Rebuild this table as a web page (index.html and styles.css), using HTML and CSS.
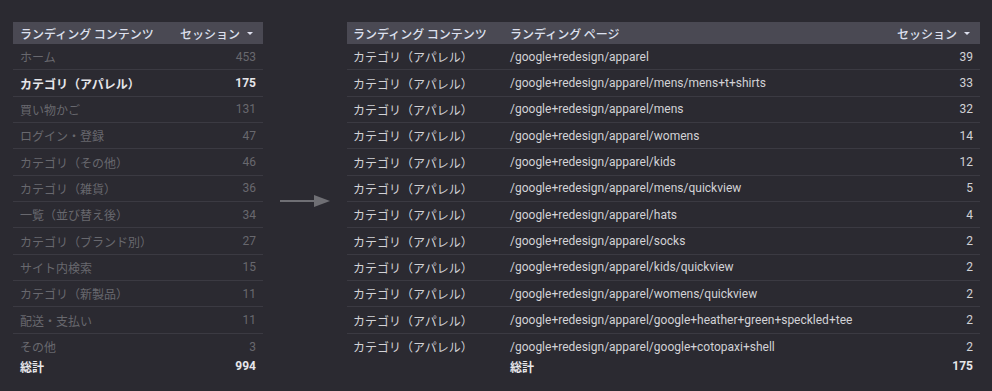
FILE: index.html
```html
<!DOCTYPE html>
<html lang="ja">
<head>
<meta charset="utf-8">
<link rel="stylesheet" href="styles.css">
</head>
<body>
<div class="page">
  <div class="tbl left">
    <div class="hdr">
      <span class="c1">ランディング コンテンツ</span>
      <span class="num sort">セッション <span class="tri"></span></span>
    </div>
    <div class="row dim"><span>ホーム</span><span class="num">453</span></div>
    <div class="row hi"><span>カテゴリ（アパレル）</span><span class="num">175</span></div>
    <div class="row dim"><span>買い物かご</span><span class="num">131</span></div>
    <div class="row dim"><span>ログイン・登録</span><span class="num">47</span></div>
    <div class="row dim"><span>カテゴリ（その他）</span><span class="num">46</span></div>
    <div class="row dim"><span>カテゴリ（雑貨）</span><span class="num">36</span></div>
    <div class="row dim"><span>一覧（並び替え後）</span><span class="num">34</span></div>
    <div class="row dim"><span>カテゴリ（ブランド別）</span><span class="num">27</span></div>
    <div class="row dim"><span>サイト内検索</span><span class="num">15</span></div>
    <div class="row dim"><span>カテゴリ（新製品）</span><span class="num">11</span></div>
    <div class="row dim"><span>配送・支払い</span><span class="num">11</span></div>
    <div class="row dim last"><span>その他</span><span class="num">3</span></div>
    <div class="total"><span>総計</span><span class="num">994</span></div>
  </div>

  <div class="arrow">
    <svg width="50" height="12" viewBox="0 0 50 12">
      <rect x="0" y="5" width="37" height="2" fill="#6f6f74"/>
      <polygon points="34,0 50,6 34,12" fill="#6f6f74"/>
    </svg>
  </div>

  <div class="tbl right">
    <div class="hdr">
      <span>ランディング コンテンツ</span>
      <span>ランディング ページ</span>
      <span class="num sort">セッション <span class="tri"></span></span>
    </div>
    <div class="row"><span>カテゴリ（アパレル）</span><span class="url">/google+redesign/apparel</span><span class="num">39</span></div>
    <div class="row"><span>カテゴリ（アパレル）</span><span class="url">/google+redesign/apparel/mens/mens+t+shirts</span><span class="num">33</span></div>
    <div class="row"><span>カテゴリ（アパレル）</span><span class="url">/google+redesign/apparel/mens</span><span class="num">32</span></div>
    <div class="row"><span>カテゴリ（アパレル）</span><span class="url">/google+redesign/apparel/womens</span><span class="num">14</span></div>
    <div class="row"><span>カテゴリ（アパレル）</span><span class="url">/google+redesign/apparel/kids</span><span class="num">12</span></div>
    <div class="row"><span>カテゴリ（アパレル）</span><span class="url">/google+redesign/apparel/mens/quickview</span><span class="num">5</span></div>
    <div class="row"><span>カテゴリ（アパレル）</span><span class="url">/google+redesign/apparel/hats</span><span class="num">4</span></div>
    <div class="row"><span>カテゴリ（アパレル）</span><span class="url">/google+redesign/apparel/socks</span><span class="num">2</span></div>
    <div class="row"><span>カテゴリ（アパレル）</span><span class="url">/google+redesign/apparel/kids/quickview</span><span class="num">2</span></div>
    <div class="row"><span>カテゴリ（アパレル）</span><span class="url">/google+redesign/apparel/womens/quickview</span><span class="num">2</span></div>
    <div class="row"><span>カテゴリ（アパレル）</span><span class="url">/google+redesign/apparel/google+heather+green+speckled+tee</span><span class="num">2</span></div>
    <div class="row last"><span>カテゴリ（アパレル）</span><span class="url">/google+redesign/apparel/google+cotopaxi+shell</span><span class="num">2</span></div>
    <div class="total"><span></span><span>総計</span><span class="num">175</span></div>
  </div>
</div>
</body>
</html>
```

FILE: styles.css
```css
html, body {
  margin: 0;
  padding: 0;
  background: #2b2a31;
}

body {
  font-family: Roboto, "Noto Sans CJK JP", sans-serif;
  font-size: 12px;
  color: #d2d2d6;
}

.page {
  display: flex;
  align-items: flex-start;
  padding: 22px 12px 0 13px;
  height: 391px;
  box-sizing: border-box;
}

.tbl {
  display: flex;
  flex-direction: column;
}

.left {
  width: 250px;
}

.right {
  width: 633px;
}

.hdr,
.row,
.total {
  display: grid;
  align-items: center;
  padding: 0 7px 0 7px;
}

.left .hdr,
.left .row,
.left .total {
  grid-template-columns: 1fr auto;
}

.right .hdr,
.right .row,
.right .total {
  grid-template-columns: 157px 1fr auto;
  padding-left: 6px;
}

.hdr {
  height: 22px;
  background: #4a4953;
  color: #dde0ee;
  font-family: "Noto Sans CJK JP", sans-serif;
  font-size: 12px;
  font-weight: 500;
}

.sort {
  display: flex;
  align-items: center;
  gap: 5px;
  padding-right: 0;
}

.tri {
  display: inline-block;
  width: 0;
  height: 0;
  border-left: 3px solid transparent;
  border-right: 3px solid transparent;
  border-top: 3px solid #dde0ee;
  margin-left: 2px;
  margin-top: 1px;
}

.left .sort {
  padding-right: 3px;
}

.right .sort {
  padding-right: 3px;
}

.row {
  height: 26.35px;
  box-sizing: border-box;
  border-bottom: 1px solid #3b3a42;
}

.row.last {
  border-bottom: none;
}

.row span:first-child,
.total span:first-child,
.right .total span:nth-child(2) {
  font-family: "Noto Sans CJK JP", sans-serif;
}

.url {
  font-family: Roboto, sans-serif;
}

.num {
  text-align: right;
  font-family: Roboto, sans-serif;
}

.hdr .num {
  font-family: "Noto Sans CJK JP", sans-serif;
  justify-self: end;
}

.row.dim {
  color: #68686e;
}

.row.hi {
  color: #e6e6ea;
  font-weight: 700;
}

.total {
  height: 13px;
  margin-top: 0;
  color: #e6e6ea;
  font-weight: 700;
  line-height: 13px;
}

.arrow {
  width: 84px;
  padding-left: 17px;
  padding-top: 173px;
  box-sizing: border-box;
}

.arrow svg {
  display: block;
}
```
